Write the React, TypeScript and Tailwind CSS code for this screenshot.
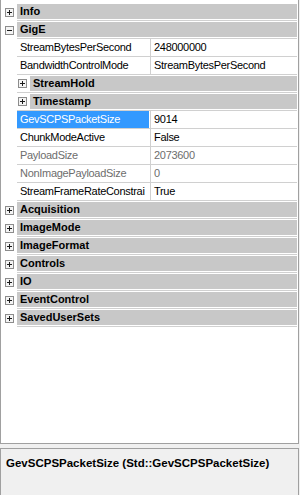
import React from 'react';

type Row =
  | { kind: 'cat'; label: string; open?: boolean; level?: number }
  | { kind: 'prop'; name: string; value: string; disabled?: boolean; selected?: boolean };

const rows: Row[] = [
  { kind: 'cat', label: 'Info' },
  { kind: 'cat', label: 'GigE', open: true },
  { kind: 'prop', name: 'StreamBytesPerSecond', value: '248000000' },
  { kind: 'prop', name: 'BandwidthControlMode', value: 'StreamBytesPerSecond' },
  { kind: 'cat', label: 'StreamHold', level: 1 },
  { kind: 'cat', label: 'Timestamp', level: 1 },
  { kind: 'prop', name: 'GevSCPSPacketSize', value: '9014', selected: true },
  { kind: 'prop', name: 'ChunkModeActive', value: 'False' },
  { kind: 'prop', name: 'PayloadSize', value: '2073600', disabled: true },
  { kind: 'prop', name: 'NonImagePayloadSize', value: '0', disabled: true },
  { kind: 'prop', name: 'StreamFrameRateConstrai', value: 'True' },
  { kind: 'cat', label: 'Acquisition' },
  { kind: 'cat', label: 'ImageMode' },
  { kind: 'cat', label: 'ImageFormat' },
  { kind: 'cat', label: 'Controls' },
  { kind: 'cat', label: 'IO' },
  { kind: 'cat', label: 'EventControl' },
  { kind: 'cat', label: 'SavedUserSets' },
];

function ExpandBox({ open }: { open?: boolean }) {
  return (
    <svg width="9" height="9" viewBox="0 0 9 9" className="block">
      <rect x="0.5" y="0.5" width="8" height="8" fill="#f4f4f4" stroke="#8c8c8c" />
      <line x1="2" y1="4.5" x2="7" y2="4.5" stroke="#1a1a1a" />
      {!open && <line x1="4.5" y1="2" x2="4.5" y2="7" stroke="#1a1a1a" />}
    </svg>
  );
}

export default function App() {
  return (
    <div
      className="w-[300px] h-[495px] bg-[#f0f0f0] flex flex-col text-[11px] text-black"
      style={{ fontFamily: '"Liberation Sans", Arial, sans-serif' }}
    >
      {/* дерево свойств */}
      <div className="h-[444px] bg-white border-l border-r border-b border-[#a0a0a0] w-[299px] pt-[3px]">
        {rows.map((r, i) =>
          r.kind === 'cat' ? (
            <div key={i} className="h-[18px] flex">
              {r.level ? (
                <>
                  <div className="w-[16px]" />
                  <div className="flex-1 flex border-b border-[#d0d0d0] mr-[1px]">
                    <div className="w-[13px] flex items-center pl-[1px]">
                      <ExpandBox open={r.open} />
                    </div>
                    <div className="flex-1 py-[1px]">
                      <div className="h-[15px] bg-[#c8c8c8] font-bold leading-[15px] pl-[3px]">{r.label}</div>
                    </div>
                  </div>
                </>
              ) : (
                <>
                  <div className="w-[16px] flex items-center pl-[4px]">
                    <ExpandBox open={r.open} />
                  </div>
                  <div className="flex-1 border-b border-[#d0d0d0] mr-[1px] py-[1px]">
                    <div className="h-[15px] bg-[#c8c8c8] font-bold leading-[15px] pl-[3px]">{r.label}</div>
                  </div>
                </>
              )}
            </div>
          ) : (
            <div key={i} className="h-[18px] flex">
              <div className="w-[16px]" />
              <div className="flex-1 flex border-b border-[#d0d0d0] mr-[1px]">
                <div
                  className={`w-[132px] overflow-hidden whitespace-nowrap leading-[17px] pl-[3px] tracking-[-0.3px] ${
                    r.selected ? 'bg-[#3399ff] text-white' : r.disabled ? 'text-[#6d6d6d]' : ''
                  }`}
                >
                  {r.name}
                </div>
                <div className="w-[1px] bg-[#d0d0d0] ml-[1px]" />
                <div
                  className={`flex-1 whitespace-nowrap overflow-hidden leading-[17px] pl-[3px] tracking-[-0.3px] ${
                    r.disabled ? 'text-[#6d6d6d]' : ''
                  }`}
                >
                  {r.value}
                </div>
              </div>
            </div>
          )
        )}
      </div>

      {/* описание */}
      <div className="mt-[4px] flex-1 w-[299px] border-t border-l border-r border-[#a0a0a0] bg-[#f0f0f0] px-[5px] pt-[6px]">
        <div className="font-bold text-[11.5px] whitespace-nowrap">GevSCPSPacketSize (Std::GevSCPSPacketSize)</div>
      </div>
    </div>
  );
}
